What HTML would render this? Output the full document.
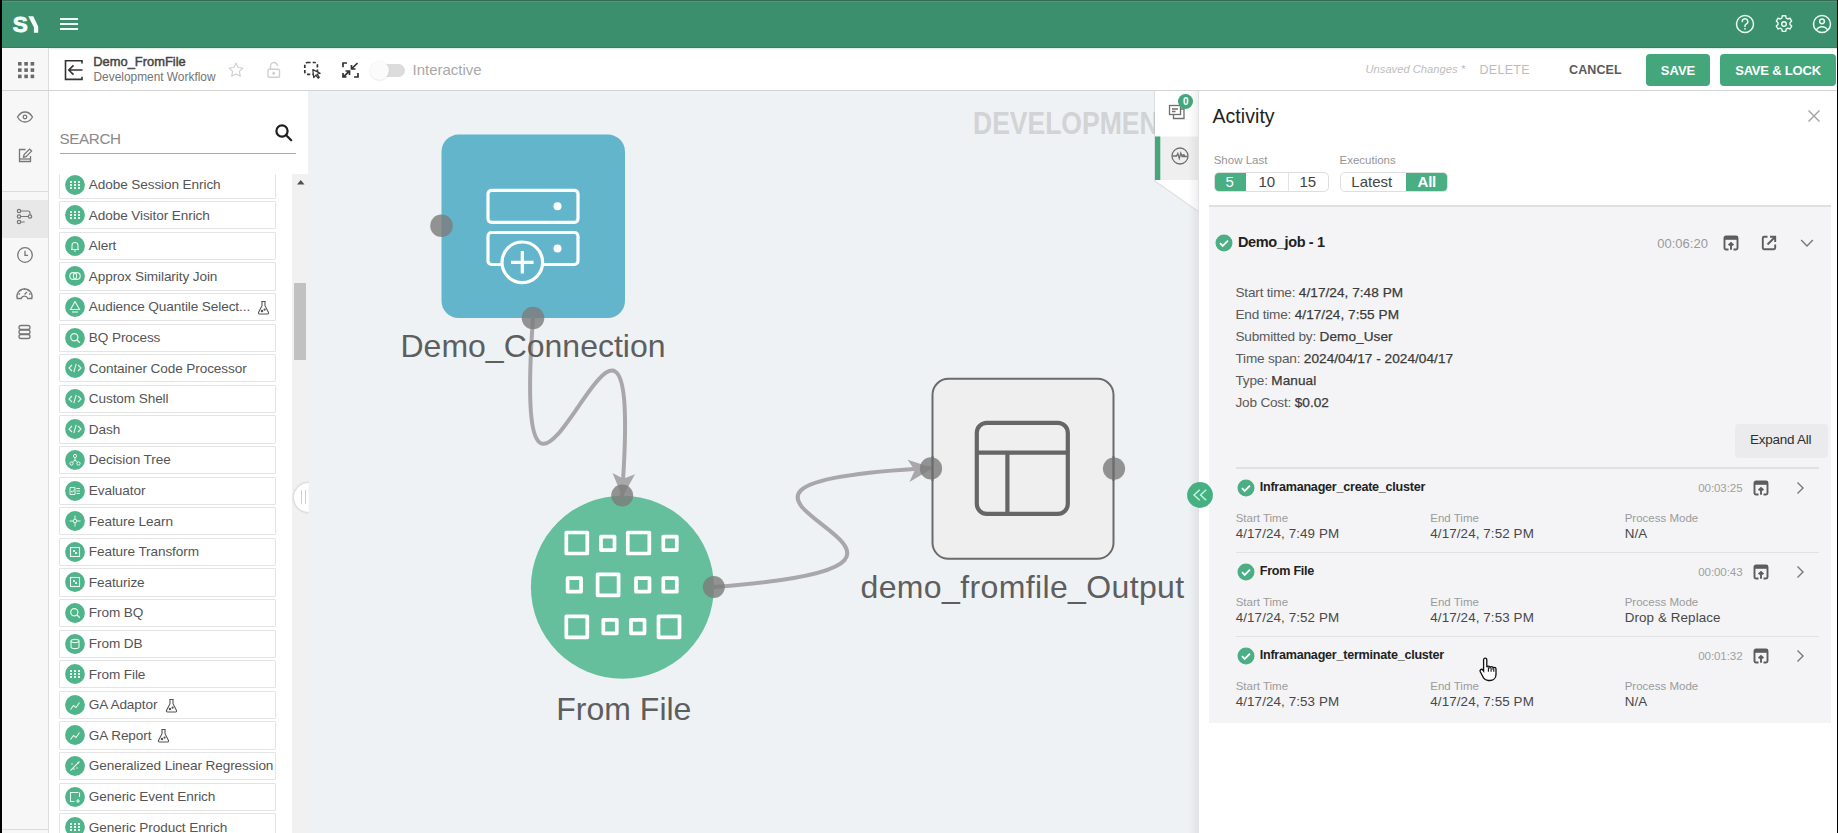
<!DOCTYPE html>
<html><head><meta charset="utf-8">
<style>
*{box-sizing:border-box;margin:0;padding:0}
html,body{width:1838px;height:833px;overflow:hidden;background:#fff;font-family:"Liberation Sans",sans-serif;position:relative}
.a{position:absolute}
.t{position:absolute;white-space:nowrap;line-height:1}
svg{position:absolute;overflow:visible}
#hdr{left:0;top:0;width:1838px;height:48px;background:#3b8f6c}
#hdrtop{left:0;top:0;width:1838px;height:1px;background:#356b54}
#hdrtop2{left:0;top:1px;width:1838px;height:1px;background:#43a078}
#lb{left:0;top:0;width:2px;height:833px;background:#000}
#rb{left:1837px;top:0;width:1px;height:833px;background:#000}
#side{left:2px;top:48px;width:47px;height:785px;background:#f7f7f7;border-right:1px solid #dcdcdc}
#tb{left:49px;top:48px;width:1788px;height:43px;background:#fff}
#tbline{left:2px;top:90px;width:1835px;height:1px;background:#d4d4d4}
#pal{left:49px;top:91px;width:259px;height:742px;background:#fff}
#canvas{left:308px;top:91px;width:890px;height:742px;background:#eef2f5;overflow:hidden}
#panel{left:1198px;top:91px;width:639px;height:742px;background:#fff;border-left:1px solid #e2e2e4}
.btn{position:absolute;background:#43a77b;border-radius:4px;color:#fff;font-weight:700;font-size:13px;line-height:33.6px;text-align:center;white-space:nowrap}
.item{position:absolute;left:59.5px;width:216.5px;height:28.4px;border:1px solid #e4e4e4;border-radius:1px;background:#fff}
.item .ic{position:absolute;left:4px;top:3.5px;width:20px;height:20px;border-radius:50%;background:#4fb389}
.item .tx{position:absolute;left:28.5px;top:6.5px;font-size:13.6px;line-height:1;color:#555;white-space:nowrap;letter-spacing:-0.1px}
</style></head><body>
<div id="hdr" class="a"></div>
<div id="hdrtop" class="a"></div>
<div id="hdrtop2" class="a"></div>
<div class="a" style="left:0;top:46.8px;width:1838px;height:1.3px;background:#3f7c62"></div>
<!-- logo -->
<div class="t" style="left:12.8px;top:13.9px;font-size:22.5px;font-weight:700;color:#f4fff9;-webkit-text-stroke:0.9px #f4fff9">S</div>
<svg style="left:0;top:0" width="60" height="48"><polygon points="28.2,16.2 33.3,16.2 38.2,26.4 38.2,32.7 33.9,32.7 33.9,27.3" fill="#f4fff9"/></svg>
<!-- hamburger -->
<div class="a" style="left:60px;top:18.4px;width:18px;height:2px;background:#effff8"></div>
<div class="a" style="left:60px;top:23.2px;width:18px;height:2px;background:#effff8"></div>
<div class="a" style="left:60px;top:28.1px;width:18px;height:2px;background:#effff8"></div>
<!-- header right icons -->
<svg style="left:1733px;top:12px" width="24" height="24" viewBox="0 0 24 24"><circle cx="12" cy="12" r="8.5" fill="none" stroke="#e6fff3" stroke-width="1.5"/><path d="M9.2 9.6a2.8 2.8 0 1 1 3.9 2.5c-.8.4-1.1.9-1.1 1.7v.6" fill="none" stroke="#e6fff3" stroke-width="1.5" stroke-linecap="round"/><circle cx="12" cy="16.8" r="0.9" fill="#e6fff3"/></svg>
<svg style="left:1771.5px;top:12px" width="24" height="24" viewBox="0 0 24 24"><path d="M10.3 3.8h3.4l.5 2.3 1.6.9 2.2-.8 1.7 2.9-1.7 1.6v1.8l1.7 1.6-1.7 2.9-2.2-.8-1.6.9-.5 2.3h-3.4l-.5-2.3-1.6-.9-2.2.8-1.7-2.9 1.7-1.6v-1.8L4.3 9.1 6 6.2l2.2.8 1.6-.9z" fill="none" stroke="#e6fff3" stroke-width="1.4" stroke-linejoin="round"/><circle cx="12" cy="12" r="2.3" fill="none" stroke="#e6fff3" stroke-width="1.4"/></svg>
<svg style="left:1810px;top:12px" width="24" height="24" viewBox="0 0 24 24"><circle cx="12" cy="12" r="8.5" fill="none" stroke="#e6fff3" stroke-width="1.5"/><circle cx="12" cy="9.3" r="2.4" fill="none" stroke="#e6fff3" stroke-width="1.5"/><path d="M6.3 18.2c1.2-2.3 3.3-3.5 5.7-3.5s4.5 1.2 5.7 3.5" fill="none" stroke="#e6fff3" stroke-width="1.5"/></svg>

<div id="side" class="a"></div>
<div id="tb" class="a"></div>
<div id="tbline" class="a"></div>
<div class="a" style="left:49px;top:48px;width:1788px;height:2px;background:linear-gradient(#d9ece4,rgba(255,255,255,0))"></div>
<!-- apps grid -->
<svg style="left:18px;top:62px" width="17" height="17" viewBox="0 0 17 17" fill="#6a6a6a"><rect x="0" y="0" width="3.6" height="3.6"/><rect x="6.3" y="0" width="3.6" height="3.6"/><rect x="12.6" y="0" width="3.6" height="3.6"/><rect x="0" y="6.3" width="3.6" height="3.6"/><rect x="6.3" y="6.3" width="3.6" height="3.6"/><rect x="12.6" y="6.3" width="3.6" height="3.6"/><rect x="0" y="12.6" width="3.6" height="3.6"/><rect x="6.3" y="12.6" width="3.6" height="3.6"/><rect x="12.6" y="12.6" width="3.6" height="3.6"/></svg>
<!-- sidebar icons -->
<div class="a" style="left:2px;top:191px;width:46px;height:1px;background:#dcdcdc"></div>
<div class="a" style="left:2px;top:200px;width:46px;height:38px;background:#e8e8e8"></div>
<svg style="left:15px;top:108px" width="20" height="18" viewBox="0 0 20 18"><path d="M2.5 9C4.5 5.6 7 4 10 4s5.5 1.6 7.5 5c-2 3.4-4.5 5-7.5 5S4.5 12.4 2.5 9z" fill="none" stroke="#777" stroke-width="1.3"/><circle cx="10" cy="9" r="1.8" fill="none" stroke="#777" stroke-width="1.3"/></svg>
<svg style="left:15px;top:146px" width="20" height="20" viewBox="0 0 20 20"><path d="M10.5 3.5H4.5v12h11V10" fill="none" stroke="#777" stroke-width="1.3"/><path d="M4.5 13h11" stroke="#777" stroke-width="1.3"/><path d="M8.5 11.2l.6-2.6 5.5-5.5 2 2-5.5 5.5z" fill="none" stroke="#777" stroke-width="1.3"/></svg>
<svg style="left:14px;top:206px" width="22" height="22" viewBox="0 0 22 22" fill="none" stroke="#777" stroke-width="1.2"><circle cx="5" cy="5" r="1.7"/><circle cx="5" cy="10.5" r="1.7"/><circle cx="5" cy="16" r="1.7"/><path d="M6.7 5h7.3a2 2 0 0 1 2 2v1.8"/><circle cx="16" cy="10.5" r="1.7"/><path d="M6.7 10.5h7.6M6.7 16h4"/></svg>
<svg style="left:14.5px;top:245px" width="20" height="20" viewBox="0 0 20 20" fill="none" stroke="#777" stroke-width="1.3"><circle cx="10" cy="10" r="7.3"/><path d="M10 5.8v4.5h3"/></svg>
<svg style="left:14px;top:283px" width="21" height="20" viewBox="0 0 21 20" fill="none" stroke="#777" stroke-width="1.3"><path d="M3.2 15.5A7.6 7.6 0 1 1 17.8 15.5h-4a3.5 3.5 0 0 0-6.6 0z"/><path d="M10.5 5.2v1.6M6.3 7l1 1.1M14.7 7l-1 1.1M4.6 11h1.5M16.4 11h-1.5M10.5 11.5l2.5-2.5"/></svg>
<svg style="left:14px;top:322px" width="21" height="20" viewBox="0 0 21 20" fill="none" stroke="#777" stroke-width="1.3"><rect x="5" y="3.5" width="11" height="4" rx="2"/><rect x="5" y="8" width="11" height="4" rx="2"/><rect x="5" y="12.5" width="11" height="4" rx="2"/></svg>
<div class="a" style="left:2px;top:828.5px;width:46px;height:1px;background:#dcdcdc"></div>

<!-- toolbar -->
<svg style="left:64px;top:59px" width="20" height="22" viewBox="0 0 20 22" fill="none" stroke="#333" stroke-width="1.6"><path d="M18 4.5V1.8H1.5v18.6H18v-2.7"/><path d="M18.5 11H5M9.5 6.4L4.8 11l4.7 4.6"/></svg>
<div class="t" style="left:93.3px;top:55.5px;font-size:12.9px;font-weight:400;color:#444;-webkit-text-stroke:0.45px #444;letter-spacing:0px">Demo_FromFile</div>
<div class="t" style="left:93.5px;top:72.2px;font-size:11.9px;color:#747474">Development Workflow</div>
<svg style="left:227px;top:60.5px" width="18" height="18" viewBox="0 0 24 24"><path d="M12 2.8l2.8 5.9 6.4.8-4.7 4.4 1.2 6.3L12 17.1l-5.7 3.1 1.2-6.3-4.7-4.4 6.4-.8z" fill="none" stroke="#cfcfcf" stroke-width="1.5" stroke-linejoin="round"/></svg>
<svg style="left:266px;top:61px" width="16" height="18" viewBox="0 0 16 18" fill="none" stroke="#cfcfcf" stroke-width="1.4"><path d="M4.5 8V5.2a3.5 3.5 0 0 1 7-.3"/><rect x="2" y="8.2" width="11.5" height="8" rx="1.2"/><circle cx="7.75" cy="12.2" r="0.8" fill="#cfcfcf"/></svg>
<svg style="left:303px;top:61px" width="20" height="20" viewBox="0 0 20 20" fill="none" stroke="#333" stroke-width="1.7"><rect x="1.8" y="1.5" width="12.6" height="11.8" rx="2.6" stroke-dasharray="3.2 2.1"/><path d="M9.8 8.6l7.4 3.6-3.2 1 2.3 3.1-1.2.9-2.3-3.1-2.1 2.5z" fill="#fff" stroke-width="1.2" stroke-linejoin="round"/></svg>
<svg style="left:342px;top:62px" width="17" height="16" viewBox="0 0 17 16" fill="none" stroke="#333" stroke-width="1.7"><path d="M1 5.2V1h4M16 11v4h-4M1 11v4h3.5M15.5 1L9.5 7M9.5 3v4h4M1.5 14.8L7.5 8.8M3.5 9h4v4"/></svg>
<div class="a" style="left:371px;top:63.5px;width:33.5px;height:13.5px;border-radius:7px;background:#dcdcdc"></div>
<div class="a" style="left:369.8px;top:60.8px;width:19px;height:19px;border-radius:50%;background:#fbfbfb;box-shadow:0 0.5px 2px rgba(0,0,0,0.12)"></div>
<div class="t" style="left:412.5px;top:62px;font-size:15px;color:#a9a9a9">Interactive</div>

<div class="t" style="left:1365.5px;top:64.3px;font-size:11.2px;font-style:italic;color:#bdbdbd">Unsaved Changes *</div>
<div class="t" style="left:1479.5px;top:64.3px;font-size:12.5px;color:#bcbcbc;letter-spacing:0.3px">DELETE</div>
<div class="t" style="left:1569px;top:64.3px;font-size:12.5px;font-weight:700;color:#5a5a5a;letter-spacing:0.1px">CANCEL</div>
<div class="btn" style="left:1646px;top:54px;width:64px;height:32px">SAVE</div>
<div class="btn" style="left:1720px;top:54px;width:116px;height:32px;letter-spacing:-0.2px">SAVE &amp; LOCK</div>
<div class="a" style="left:49px;top:173.5px;width:243px;height:660px;overflow:hidden">
<div class="item" style="left:10.3px;top:-3.0px"><svg style="left:4.6px;top:3px" width="20" height="20" viewBox="0 0 20 20"><circle cx="10" cy="10" r="9.9" fill="#50b48b"/><g fill="#e9f7f0"><rect x="5" y="6" width="2" height="2"/><rect x="9" y="6" width="2" height="2"/><rect x="13" y="6" width="2" height="2"/><rect x="5" y="9" width="2" height="2"/><rect x="9" y="9" width="2" height="2"/><rect x="13" y="9" width="2" height="2"/><rect x="5" y="12" width="2" height="2"/><rect x="9" y="12" width="2" height="2"/><rect x="13" y="12" width="2" height="2"/></g></svg><div class="tx">Adobe Session Enrich</div></div>
<div class="item" style="left:10.3px;top:27.6px"><svg style="left:4.6px;top:3px" width="20" height="20" viewBox="0 0 20 20"><circle cx="10" cy="10" r="9.9" fill="#50b48b"/><g fill="#e9f7f0"><rect x="5" y="6" width="2" height="2"/><rect x="9" y="6" width="2" height="2"/><rect x="13" y="6" width="2" height="2"/><rect x="5" y="9" width="2" height="2"/><rect x="9" y="9" width="2" height="2"/><rect x="13" y="9" width="2" height="2"/><rect x="5" y="12" width="2" height="2"/><rect x="9" y="12" width="2" height="2"/><rect x="13" y="12" width="2" height="2"/></g></svg><div class="tx">Adobe Visitor Enrich</div></div>
<div class="item" style="left:10.3px;top:58.2px"><svg style="left:4.6px;top:3px" width="20" height="20" viewBox="0 0 20 20"><circle cx="10" cy="10" r="9.9" fill="#50b48b"/><path d="M6 13.5h8M7 13.5V9.5a3 3 0 0 1 6 0v4M9 15h2" fill="none" stroke="#e9f7f0" stroke-width="1.1"/></svg><div class="tx">Alert</div></div>
<div class="item" style="left:10.3px;top:88.8px"><svg style="left:4.6px;top:3px" width="20" height="20" viewBox="0 0 20 20"><circle cx="10" cy="10" r="9.9" fill="#50b48b"/><circle cx="8.2" cy="10" r="3.4" fill="none" stroke="#e9f7f0" stroke-width="1.1"/><circle cx="11.8" cy="10" r="3.4" fill="none" stroke="#e9f7f0" stroke-width="1.1"/></svg><div class="tx">Approx Similarity Join</div></div>
<div class="item" style="left:10.3px;top:119.4px"><svg style="left:4.6px;top:3px" width="20" height="20" viewBox="0 0 20 20"><circle cx="10" cy="10" r="9.9" fill="#50b48b"/><path d="M10 4.5l4.5 8h-9z" fill="none" stroke="#e9f7f0" stroke-width="1.1"/><path d="M7 15h6" stroke="#e9f7f0" stroke-width="1.1"/></svg><div class="tx">Audience Quantile Select...</div><svg style="left:196.5px;top:6px" width="13" height="15" viewBox="0 0 13 15" fill="none" stroke="#555" stroke-width="1.1"><path d="M4.3 1.5h4.4M5 1.5v4.2L1.5 12.6a1 1 0 0 0 .9 1.4h8.2a1 1 0 0 0 .9-1.4L8 5.7V1.5"/><circle cx="5" cy="11" r=".7" fill="#555"/><circle cx="7.6" cy="9.6" r=".6" fill="#555"/></svg></div>
<div class="item" style="left:10.3px;top:150.0px"><svg style="left:4.6px;top:3px" width="20" height="20" viewBox="0 0 20 20"><circle cx="10" cy="10" r="9.9" fill="#50b48b"/><circle cx="9.3" cy="9.3" r="3.6" fill="none" stroke="#e9f7f0" stroke-width="1.2"/><path d="M12 12l2.8 2.8" stroke="#e9f7f0" stroke-width="1.3"/></svg><div class="tx">BQ Process</div></div>
<div class="item" style="left:10.3px;top:180.6px"><svg style="left:4.6px;top:3px" width="20" height="20" viewBox="0 0 20 20"><circle cx="10" cy="10" r="9.9" fill="#50b48b"/><path d="M7 7l-3 3 3 3M13 7l3 3-3 3M11.2 5.8l-2.4 8.4" fill="none" stroke="#e9f7f0" stroke-width="1.1"/></svg><div class="tx">Container Code Processor</div></div>
<div class="item" style="left:10.3px;top:211.2px"><svg style="left:4.6px;top:3px" width="20" height="20" viewBox="0 0 20 20"><circle cx="10" cy="10" r="9.9" fill="#50b48b"/><path d="M7 7l-3 3 3 3M13 7l3 3-3 3M11.2 5.8l-2.4 8.4" fill="none" stroke="#e9f7f0" stroke-width="1.1"/></svg><div class="tx">Custom Shell</div></div>
<div class="item" style="left:10.3px;top:241.8px"><svg style="left:4.6px;top:3px" width="20" height="20" viewBox="0 0 20 20"><circle cx="10" cy="10" r="9.9" fill="#50b48b"/><path d="M7 7l-3 3 3 3M13 7l3 3-3 3M11.2 5.8l-2.4 8.4" fill="none" stroke="#e9f7f0" stroke-width="1.1"/></svg><div class="tx">Dash</div></div>
<div class="item" style="left:10.3px;top:272.4px"><svg style="left:4.6px;top:3px" width="20" height="20" viewBox="0 0 20 20"><circle cx="10" cy="10" r="9.9" fill="#50b48b"/><circle cx="10" cy="6" r="1.6" fill="none" stroke="#e9f7f0" stroke-width="1"/><circle cx="6.5" cy="13.5" r="1.6" fill="none" stroke="#e9f7f0" stroke-width="1"/><circle cx="13.5" cy="13.5" r="1.6" fill="none" stroke="#e9f7f0" stroke-width="1"/><path d="M10 7.6v2.6M7.5 12l2.5-1.8 2.5 1.8" fill="none" stroke="#e9f7f0" stroke-width="1"/></svg><div class="tx">Decision Tree</div></div>
<div class="item" style="left:10.3px;top:303.0px"><svg style="left:4.6px;top:3px" width="20" height="20" viewBox="0 0 20 20"><circle cx="10" cy="10" r="9.9" fill="#50b48b"/><path d="M5 6.5h5v7H5zM11.5 7.5h3.5M11.5 10h3.5M11.5 12.5h3.5M6 10l1.3 1.3L9.5 8.5" fill="none" stroke="#e9f7f0" stroke-width="1"/></svg><div class="tx">Evaluator</div></div>
<div class="item" style="left:10.3px;top:333.6px"><svg style="left:4.6px;top:3px" width="20" height="20" viewBox="0 0 20 20"><circle cx="10" cy="10" r="9.9" fill="#50b48b"/><circle cx="10" cy="10" r="1.8" fill="none" stroke="#e9f7f0" stroke-width="1"/><path d="M10 4.5v3.7M10 11.8v3.7M4.5 10h3.7M11.8 10h3.7" stroke="#e9f7f0" stroke-width="1"/></svg><div class="tx">Feature Learn</div></div>
<div class="item" style="left:10.3px;top:364.2px"><svg style="left:4.6px;top:3px" width="20" height="20" viewBox="0 0 20 20"><circle cx="10" cy="10" r="9.9" fill="#50b48b"/><rect x="5.5" y="5.5" width="9" height="9" fill="none" stroke="#e9f7f0" stroke-width="1.1"/><path d="M8 8h2v2H8zM10 10h2v2h-2z" fill="#e9f7f0"/></svg><div class="tx">Feature Transform</div></div>
<div class="item" style="left:10.3px;top:394.8px"><svg style="left:4.6px;top:3px" width="20" height="20" viewBox="0 0 20 20"><circle cx="10" cy="10" r="9.9" fill="#50b48b"/><rect x="5.5" y="5.5" width="9" height="9" fill="none" stroke="#e9f7f0" stroke-width="1.1"/><path d="M8 8h2v2H8zM10 10h2v2h-2z" fill="#e9f7f0"/></svg><div class="tx">Featurize</div></div>
<div class="item" style="left:10.3px;top:425.4px"><svg style="left:4.6px;top:3px" width="20" height="20" viewBox="0 0 20 20"><circle cx="10" cy="10" r="9.9" fill="#50b48b"/><circle cx="9.3" cy="9.3" r="3.6" fill="none" stroke="#e9f7f0" stroke-width="1.2"/><path d="M12 12l2.8 2.8" stroke="#e9f7f0" stroke-width="1.3"/></svg><div class="tx">From BQ</div></div>
<div class="item" style="left:10.3px;top:456.0px"><svg style="left:4.6px;top:3px" width="20" height="20" viewBox="0 0 20 20"><circle cx="10" cy="10" r="9.9" fill="#50b48b"/><ellipse cx="10" cy="7" rx="4" ry="1.6" fill="none" stroke="#e9f7f0" stroke-width="1.1"/><path d="M6 7v6c0 .9 1.8 1.6 4 1.6s4-.7 4-1.6V7" fill="none" stroke="#e9f7f0" stroke-width="1.1"/></svg><div class="tx">From DB</div></div>
<div class="item" style="left:10.3px;top:486.6px"><svg style="left:4.6px;top:3px" width="20" height="20" viewBox="0 0 20 20"><circle cx="10" cy="10" r="9.9" fill="#50b48b"/><g fill="#e9f7f0"><rect x="5" y="6" width="2" height="2"/><rect x="9" y="6" width="2" height="2"/><rect x="13" y="6" width="2" height="2"/><rect x="5" y="9" width="2" height="2"/><rect x="9" y="9" width="2" height="2"/><rect x="13" y="9" width="2" height="2"/><rect x="5" y="12" width="2" height="2"/><rect x="9" y="12" width="2" height="2"/><rect x="13" y="12" width="2" height="2"/></g></svg><div class="tx">From File</div></div>
<div class="item" style="left:10.3px;top:517.2px"><svg style="left:4.6px;top:3px" width="20" height="20" viewBox="0 0 20 20"><circle cx="10" cy="10" r="9.9" fill="#50b48b"/><path d="M5.5 14.5l3-4 2.5 2 3.5-5" fill="none" stroke="#e9f7f0" stroke-width="1.1"/></svg><div class="tx">GA Adaptor</div><svg style="left:104.5px;top:6px" width="13" height="15" viewBox="0 0 13 15" fill="none" stroke="#555" stroke-width="1.1"><path d="M4.3 1.5h4.4M5 1.5v4.2L1.5 12.6a1 1 0 0 0 .9 1.4h8.2a1 1 0 0 0 .9-1.4L8 5.7V1.5"/><circle cx="5" cy="11" r=".7" fill="#555"/><circle cx="7.6" cy="9.6" r=".6" fill="#555"/></svg></div>
<div class="item" style="left:10.3px;top:547.8px"><svg style="left:4.6px;top:3px" width="20" height="20" viewBox="0 0 20 20"><circle cx="10" cy="10" r="9.9" fill="#50b48b"/><path d="M5.5 14.5l3-4 2.5 2 3.5-5" fill="none" stroke="#e9f7f0" stroke-width="1.1"/></svg><div class="tx">GA Report</div><svg style="left:96.5px;top:6px" width="13" height="15" viewBox="0 0 13 15" fill="none" stroke="#555" stroke-width="1.1"><path d="M4.3 1.5h4.4M5 1.5v4.2L1.5 12.6a1 1 0 0 0 .9 1.4h8.2a1 1 0 0 0 .9-1.4L8 5.7V1.5"/><circle cx="5" cy="11" r=".7" fill="#555"/><circle cx="7.6" cy="9.6" r=".6" fill="#555"/></svg></div>
<div class="item" style="left:10.3px;top:578.4px"><svg style="left:4.6px;top:3px" width="20" height="20" viewBox="0 0 20 20"><circle cx="10" cy="10" r="9.9" fill="#50b48b"/><path d="M5.5 14.5l9-9" stroke="#e9f7f0" stroke-width="1.1"/><g fill="#e9f7f0"><circle cx="7" cy="8" r=".8"/><circle cx="12" cy="12" r=".8"/><circle cx="9" cy="13" r=".8"/><circle cx="13" cy="7" r=".8"/></g></svg><div class="tx">Generalized Linear Regression</div></div>
<div class="item" style="left:10.3px;top:609.0px"><svg style="left:4.6px;top:3px" width="20" height="20" viewBox="0 0 20 20"><circle cx="10" cy="10" r="9.9" fill="#50b48b"/><path d="M13.5 5.5h-8v9h4M14.5 10v-4.5" fill="none" stroke="#e9f7f0" stroke-width="1.1"/><path d="M13 12v4M11 14h4" stroke="#e9f7f0" stroke-width="1.1"/></svg><div class="tx">Generic Event Enrich</div></div>
<div class="item" style="left:10.3px;top:639.6px"><svg style="left:4.6px;top:3px" width="20" height="20" viewBox="0 0 20 20"><circle cx="10" cy="10" r="9.9" fill="#50b48b"/><g fill="#e9f7f0"><rect x="5" y="6" width="2" height="2"/><rect x="9" y="6" width="2" height="2"/><rect x="13" y="6" width="2" height="2"/><rect x="5" y="9" width="2" height="2"/><rect x="9" y="9" width="2" height="2"/><rect x="13" y="9" width="2" height="2"/><rect x="5" y="12" width="2" height="2"/><rect x="9" y="12" width="2" height="2"/><rect x="13" y="12" width="2" height="2"/></g></svg><div class="tx">Generic Product Enrich</div></div>
</div><!-- palette search -->
<div class="t" style="left:59.5px;top:130.6px;font-size:15.2px;color:#8a8a8a;letter-spacing:-0.35px">SEARCH</div>
<svg style="left:274px;top:123px" width="20" height="20" viewBox="0 0 20 20" fill="none" stroke="#1e1e1e" stroke-width="2.2"><circle cx="8" cy="8" r="5.6"/><path d="M12.2 12.2l5 5" stroke-linecap="round"/></svg>
<div class="a" style="left:59.5px;top:152.6px;width:236.5px;height:1.6px;background:#a9a9a9"></div>
<!-- scrollbar -->
<div class="a" style="left:292px;top:173.5px;width:16.2px;height:660px;background:#f1f1f1"></div>
<svg style="left:296px;top:178px" width="10" height="8" viewBox="0 0 10 8"><path d="M1 6.5h7.5L4.75 2z" fill="#505050"/></svg>
<div class="a" style="left:294.4px;top:283px;width:12.1px;height:77px;background:#c1c1c1"></div>
<!-- canvas -->
<div id="canvas" class="a">
 <div class="t" style="left:665.3px;top:16.6px;font-size:31px;font-weight:700;color:#d2d3d5;letter-spacing:0px;transform:scaleX(0.855);transform-origin:0 0">DEVELOPMENT</div>
</div>
<!-- handle -->
<div class="a" style="left:294.4px;top:482.8px;width:29px;height:29px;border-radius:50%;background:#fff;box-shadow:0 0 3px rgba(0,0,0,0.25);clip-path:inset(-5px 14.7px -5px -5px)"></div>
<div class="a" style="left:301.3px;top:489.5px;width:1.2px;height:14.5px;background:#cfcfcf"></div>
<div class="a" style="left:305.2px;top:489.5px;width:1.2px;height:14.5px;background:#cfcfcf"></div>

<!-- nodes & edges -->
<svg style="left:0;top:0" width="1838" height="833">
 <!-- Demo_Connection node -->
 <rect x="441.5" y="134.6" width="183.5" height="183.4" rx="17" fill="#63b5cc"/>
 <g fill="none" stroke="#fff" stroke-width="3.2">
  <rect x="488" y="190.3" width="90" height="32" rx="3.5"/>
  <path d="M508 264.5H491.5a3.5 3.5 0 0 1-3.5-3.5v-25a3.5 3.5 0 0 1 3.5-3.5h83a3.5 3.5 0 0 1 3.5 3.5v25a3.5 3.5 0 0 1-3.5 3.5H537"/>
  <circle cx="522.3" cy="262.3" r="20.3" fill="#63b5cc"/>
  <path d="M522.3 251v22.6M511 262.3h22.6"/>
 </g>
 <circle cx="557.5" cy="206.3" r="4" fill="#fff"/>
 <circle cx="557.5" cy="248.5" r="4" fill="#fff"/>
 <!-- From File circle node -->
 <circle cx="622.4" cy="587.2" r="91.5" fill="#66bf9c"/>
 <g fill="none" stroke="#fff" stroke-width="3.7" stroke-linejoin="round">
  <rect x="566.3" y="532.5" width="21" height="21"/>
  <rect x="601" y="536.6" width="13.5" height="13.5"/>
  <rect x="627.8" y="532.5" width="21.5" height="21"/>
  <rect x="663.3" y="536.6" width="13.5" height="13.5"/>
  <rect x="567.6" y="578.2" width="13.5" height="13.5"/>
  <rect x="597.6" y="574.3" width="21" height="21"/>
  <rect x="636" y="578.2" width="13.5" height="13.5"/>
  <rect x="663.3" y="578.2" width="13.5" height="13.5"/>
  <rect x="566.3" y="616.3" width="21" height="21"/>
  <rect x="603.3" y="619.8" width="13.5" height="13.5"/>
  <rect x="631" y="619.8" width="13.5" height="13.5"/>
  <rect x="658.5" y="616.3" width="21" height="21"/>
 </g>
 <!-- Output node -->
 <rect x="932.5" y="378.8" width="181" height="180" rx="16" fill="#efefef" stroke="#6b6b6b" stroke-width="2"/>
 <g fill="none" stroke="#666" stroke-width="4.2">
  <rect x="976.8" y="422.9" width="91" height="91" rx="10"/>
  <path d="M976.8 452.7h91M1007.4 452.7v61"/>
 </g>
 <!-- edges -->
 <g fill="none" stroke="#a9a7a9" stroke-width="4" stroke-linecap="round">
  <path d="M533 318C508.5 662.2 647.2 153.1 622 495"/>
  <path d="M714 587C1057 561.8 587.9 486.1 931 468"/>
 </g>
 <path d="M612.5 472.9L623.4 478.8L635 474.2L622.5 497z" fill="#a9a7a9"/>
 <path d="M907.6 459.7L914.8 470.2L909.4 481.9L933 468z" fill="#a9a7a9"/>
 <!-- ports -->
 <g fill="#7d7d7d" fill-opacity="0.82">
  <circle cx="441.5" cy="225.8" r="11.3"/>
  <circle cx="533" cy="318" r="11.3"/>
  <circle cx="622.2" cy="495.5" r="11"/>
  <circle cx="713.8" cy="587" r="11"/>
  <circle cx="931" cy="468.4" r="11.1"/>
  <circle cx="1114" cy="468.6" r="11.1"/>
 </g>
 <path d="M932.5 456v25" stroke="#6b6b6b" stroke-width="2"/>
 <path d="M1113.5 456v25" stroke="#6b6b6b" stroke-width="2"/>
</svg>
<div class="t" style="left:400.5px;top:330px;font-size:32px;color:#5e5e5e">Demo_Connection</div>
<div class="t" style="left:556.3px;top:692.9px;font-size:32px;color:#5e5e5e">From File</div>
<div class="t" style="left:860.5px;top:571.2px;font-size:32px;color:#5e5e5e;letter-spacing:0.37px">demo_fromfile_Output</div>
<div id="panel" class="a"></div>
<svg style="left:1150px;top:91px" width="50" height="125"><path d="M4 0H48V121L4 90.2z" fill="#000" opacity="0.05"/><path d="M4.5 0H48V120.5L4.5 89.9z" fill="#000" opacity="0.05"/><path d="M5 0H48V119.8L5 89.6z" fill="#fff"/><rect x="5" y="45.5" width="43" height="43.5" fill="#efefef"/><rect x="5" y="45.5" width="5.3" height="43.5" fill="#43a77b"/></svg>
<svg style="left:1168px;top:103px" width="18" height="18" viewBox="0 0 18 18" fill="none" stroke="#6f6f6f" stroke-width="1.3"><rect x="1.5" y="2.5" width="11" height="9"/><path d="M4 6h6M4 8.5h3.5"/><path d="M12.5 6h3.5v9.5H5.5v-4" /></svg>
<div class="a" style="left:1178.3px;top:93.9px;width:15px;height:15px;border-radius:50%;background:#43a77b;color:#fff;font-size:10px;font-weight:700;text-align:center;line-height:15px">0</div>
<svg style="left:1170px;top:146px" width="20" height="20" viewBox="0 0 20 20" fill="none" stroke="#6f6f6f" stroke-width="1.3"><circle cx="10" cy="10" r="8"/><path d="M2.5 10h4l1.3-2.5 1.5 5 1.5-5.5 1.3 3.5h1.2c.8 0 1.2-.4 1.2-.9s-.4-.9-1-.9-.9.5-.7 1 .6.8 1.2.8h3.5"/></svg>
<div class="a" style="left:1188px;top:91px;width:10px;height:742px;background:linear-gradient(to right,rgba(0,0,0,0),rgba(0,0,0,0.06))"></div>
<div class="t" style="left:1212.5px;top:106.79px;font-size:19.5px;color:#222;letter-spacing:0.05px">Activity</div>
<svg style="left:1806px;top:108px" width="16" height="16" viewBox="0 0 16 16"><path d="M2.5 2.5l11 11M13.5 2.5l-11 11" stroke="#a6a6a6" stroke-width="1.5"/></svg>
<div class="t" style="left:1213.7px;top:155.27px;font-size:11.5px;color:#969696;">Show Last</div>
<div class="t" style="left:1339.5px;top:155.27px;font-size:11.5px;color:#969696;">Executions</div>
<div class="a" style="left:1213.7px;top:172px;width:115.3px;height:20.2px;border:1px solid #dedede;border-radius:5px;background:#fff;overflow:hidden"><div class="a" style="left:-1px;top:-1px;width:32.7px;height:20.2px;background:#4aae83"></div><div class="a" style="left:72.9px;top:0;width:1px;height:18.2px;background:#e3e3e3"></div></div>
<div class="a" style="left:1339.5px;top:172px;width:108.1px;height:20.2px;border:1px solid #dedede;border-radius:5px;background:#fff;overflow:hidden"><div class="a" style="left:65.1px;top:-1px;width:43px;height:20.2px;background:#4aae83"></div></div>
<div class="t" style="left:1225.5px;top:174.10px;font-size:15px;color:#fff;">5</div>
<div class="t" style="left:1258.5px;top:174.10px;font-size:15px;color:#444;">10</div>
<div class="t" style="left:1299.5px;top:174.10px;font-size:15px;color:#444;">15</div>
<div class="t" style="left:1351.3px;top:174.10px;font-size:15px;color:#444;">Latest</div>
<div class="t" style="left:1417.6px;top:174.10px;font-size:15px;color:#fff;font-weight:700;letter-spacing:-0.3px">All</div>
<div class="a" style="left:1209px;top:206px;width:622px;height:516.5px;background:#f4f4f6"></div>
<div class="a" style="left:1209px;top:205.3px;width:622px;height:1.3px;background:#e0e0e0"></div>
<svg style="left:1213.6px;top:232.8px" width="20" height="20" viewBox="0 0 20 20"><circle cx="10" cy="10" r="8.5" fill="#4cae84"/><path d="M6 10.2l2.7 2.7L14 7.6" fill="none" stroke="#fff" stroke-width="1.8"/></svg>
<div class="t" style="left:1237.9px;top:234.93px;font-size:14.5px;color:#222;font-weight:700;letter-spacing:-0.35px">Demo_job - 1</div>
<div class="t" style="left:1657.3px;top:236.70px;font-size:13px;color:#9a9a9a;">00:06:20</div>
<svg style="left:1722.7px;top:234.5px" width="16" height="16" viewBox="0 0 16 16" fill="none" stroke="#5d5d5d" stroke-width="1.9"><path d="M5.5 14.5H3A1.5 1.5 0 0 1 1.5 13V3A1.5 1.5 0 0 1 3 1.5h10A1.5 1.5 0 0 1 14.5 3v10a1.5 1.5 0 0 1-1.5 1.5h-2.5"/><path d="M1.5 3.3h13" stroke-width="3"/><path d="M8 14.8V8.3M5.6 10.3L8 8l2.4 2.3"/></svg>
<svg style="left:1761.3px;top:234.5px" width="16" height="16" viewBox="0 0 16 16" fill="none" stroke="#5d5d5d" stroke-width="1.9"><path d="M6.5 1.8H3A1.3 1.3 0 0 0 1.8 3v10A1.3 1.3 0 0 0 3 14.2h10a1.3 1.3 0 0 0 1.2-1.2V9.5"/><path d="M9 1.8h5.2V7M14 2L6.5 9.5"/></svg>
<svg style="left:1799.3px;top:234.5px" width="16" height="16" viewBox="0 0 16 16"><path d="M2.2 5l5.8 6 5.8-6" fill="none" stroke="#777" stroke-width="1.4"/></svg>
<div class="t" style="left:1235.5px;top:285.59px;font-size:13.6px;color:#5a5a5a;letter-spacing:-0.2px">Start time: <span style="color:#3a3a3a;-webkit-text-stroke:0.25px #3a3a3a;letter-spacing:0.05px">4/17/24, 7:48 PM</span></div>
<div class="t" style="left:1235.5px;top:307.59px;font-size:13.6px;color:#5a5a5a;letter-spacing:-0.2px">End time: <span style="color:#3a3a3a;-webkit-text-stroke:0.25px #3a3a3a;letter-spacing:0.05px">4/17/24, 7:55 PM</span></div>
<div class="t" style="left:1235.5px;top:329.59px;font-size:13.6px;color:#5a5a5a;letter-spacing:-0.2px">Submitted by: <span style="color:#3a3a3a;-webkit-text-stroke:0.25px #3a3a3a;letter-spacing:0.05px">Demo_User</span></div>
<div class="t" style="left:1235.5px;top:351.59px;font-size:13.6px;color:#5a5a5a;letter-spacing:-0.2px">Time span: <span style="color:#3a3a3a;-webkit-text-stroke:0.25px #3a3a3a;letter-spacing:0.05px">2024/04/17 - 2024/04/17</span></div>
<div class="t" style="left:1235.5px;top:373.59px;font-size:13.6px;color:#5a5a5a;letter-spacing:-0.2px">Type: <span style="color:#3a3a3a;-webkit-text-stroke:0.25px #3a3a3a;letter-spacing:0.05px">Manual</span></div>
<div class="t" style="left:1235.5px;top:395.59px;font-size:13.6px;color:#5a5a5a;letter-spacing:-0.2px">Job Cost: <span style="color:#3a3a3a;-webkit-text-stroke:0.25px #3a3a3a;letter-spacing:0.05px">$0.02</span></div>
<div class="a" style="left:1735px;top:423.7px;width:93.2px;height:34px;background:#ebebed;border-radius:4px"></div>
<div class="t" style="left:1750.0px;top:433.37px;font-size:13.5px;color:#2f2f2f;letter-spacing:-0.25px">Expand All</div>
<div class="a" style="left:1235.7px;top:467.4px;width:583.3px;height:1.2px;background:#e1e1e3"></div>
<svg style="left:1235.6px;top:477.9px" width="20" height="20" viewBox="0 0 20 20"><circle cx="10" cy="10" r="8.5" fill="#4cae84"/><path d="M6 10.2l2.7 2.7L14 7.6" fill="none" stroke="#fff" stroke-width="1.8"/></svg>
<div class="t" style="left:1259.7px;top:480.73px;font-size:12.6px;color:#222;font-weight:700;letter-spacing:-0.25px">Inframanager_create_cluster</div>
<div class="t" style="left:1698.2px;top:481.88px;font-size:11.6px;color:#a0a0a0;letter-spacing:-0.1px">00:03:25</div>
<svg style="left:1753.1px;top:479.5px" width="16" height="16" viewBox="0 0 16 16" fill="none" stroke="#5d5d5d" stroke-width="1.9"><path d="M5.5 14.5H3A1.5 1.5 0 0 1 1.5 13V3A1.5 1.5 0 0 1 3 1.5h10A1.5 1.5 0 0 1 14.5 3v10a1.5 1.5 0 0 1-1.5 1.5h-2.5"/><path d="M1.5 3.3h13" stroke-width="3"/><path d="M8 14.8V8.3M5.6 10.3L8 8l2.4 2.3"/></svg>
<svg style="left:1791.7px;top:479.7px" width="16" height="16" viewBox="0 0 16 16"><path d="M5.5 2.5l5.5 5.5-5.5 5.5" fill="none" stroke="#777" stroke-width="1.4"/></svg>
<div class="t" style="left:1235.7px;top:513.27px;font-size:11.5px;color:#9b9b9b;">Start Time</div>
<div class="t" style="left:1235.7px;top:527.06px;font-size:13.4px;color:#484848;letter-spacing:0.1px">4/17/24, 7:49 PM</div>
<div class="t" style="left:1430.3px;top:513.27px;font-size:11.5px;color:#9b9b9b;">End Time</div>
<div class="t" style="left:1430.3px;top:527.06px;font-size:13.4px;color:#484848;letter-spacing:0.1px">4/17/24, 7:52 PM</div>
<div class="t" style="left:1624.7px;top:513.27px;font-size:11.5px;color:#9b9b9b;">Process Mode</div>
<div class="t" style="left:1624.7px;top:527.06px;font-size:13.4px;color:#484848;letter-spacing:0.1px">N/A</div>
<div class="a" style="left:1235.7px;top:551.5px;width:583.3px;height:1.2px;background:#e1e1e3"></div>
<svg style="left:1235.6px;top:562.0px" width="20" height="20" viewBox="0 0 20 20"><circle cx="10" cy="10" r="8.5" fill="#4cae84"/><path d="M6 10.2l2.7 2.7L14 7.6" fill="none" stroke="#fff" stroke-width="1.8"/></svg>
<div class="t" style="left:1259.7px;top:564.83px;font-size:12.6px;color:#222;font-weight:700;letter-spacing:-0.25px">From File</div>
<div class="t" style="left:1698.2px;top:565.98px;font-size:11.6px;color:#a0a0a0;letter-spacing:-0.1px">00:00:43</div>
<svg style="left:1753.1px;top:563.6px" width="16" height="16" viewBox="0 0 16 16" fill="none" stroke="#5d5d5d" stroke-width="1.9"><path d="M5.5 14.5H3A1.5 1.5 0 0 1 1.5 13V3A1.5 1.5 0 0 1 3 1.5h10A1.5 1.5 0 0 1 14.5 3v10a1.5 1.5 0 0 1-1.5 1.5h-2.5"/><path d="M1.5 3.3h13" stroke-width="3"/><path d="M8 14.8V8.3M5.6 10.3L8 8l2.4 2.3"/></svg>
<svg style="left:1791.7px;top:563.8px" width="16" height="16" viewBox="0 0 16 16"><path d="M5.5 2.5l5.5 5.5-5.5 5.5" fill="none" stroke="#777" stroke-width="1.4"/></svg>
<div class="t" style="left:1235.7px;top:597.37px;font-size:11.5px;color:#9b9b9b;">Start Time</div>
<div class="t" style="left:1235.7px;top:611.16px;font-size:13.4px;color:#484848;letter-spacing:0.1px">4/17/24, 7:52 PM</div>
<div class="t" style="left:1430.3px;top:597.37px;font-size:11.5px;color:#9b9b9b;">End Time</div>
<div class="t" style="left:1430.3px;top:611.16px;font-size:13.4px;color:#484848;letter-spacing:0.1px">4/17/24, 7:53 PM</div>
<div class="t" style="left:1624.7px;top:597.37px;font-size:11.5px;color:#9b9b9b;">Process Mode</div>
<div class="t" style="left:1624.7px;top:611.16px;font-size:13.4px;color:#484848;letter-spacing:0.1px">Drop &amp; Replace</div>
<div class="a" style="left:1235.7px;top:635.6px;width:583.3px;height:1.2px;background:#e1e1e3"></div>
<svg style="left:1235.6px;top:646.0999999999999px" width="20" height="20" viewBox="0 0 20 20"><circle cx="10" cy="10" r="8.5" fill="#4cae84"/><path d="M6 10.2l2.7 2.7L14 7.6" fill="none" stroke="#fff" stroke-width="1.8"/></svg>
<div class="t" style="left:1259.7px;top:648.93px;font-size:12.6px;color:#222;font-weight:700;letter-spacing:-0.25px">Inframanager_terminate_cluster</div>
<div class="t" style="left:1698.2px;top:650.08px;font-size:11.6px;color:#a0a0a0;letter-spacing:-0.1px">00:01:32</div>
<svg style="left:1753.1px;top:647.7px" width="16" height="16" viewBox="0 0 16 16" fill="none" stroke="#5d5d5d" stroke-width="1.9"><path d="M5.5 14.5H3A1.5 1.5 0 0 1 1.5 13V3A1.5 1.5 0 0 1 3 1.5h10A1.5 1.5 0 0 1 14.5 3v10a1.5 1.5 0 0 1-1.5 1.5h-2.5"/><path d="M1.5 3.3h13" stroke-width="3"/><path d="M8 14.8V8.3M5.6 10.3L8 8l2.4 2.3"/></svg>
<svg style="left:1791.7px;top:647.9px" width="16" height="16" viewBox="0 0 16 16"><path d="M5.5 2.5l5.5 5.5-5.5 5.5" fill="none" stroke="#777" stroke-width="1.4"/></svg>
<div class="t" style="left:1235.7px;top:681.47px;font-size:11.5px;color:#9b9b9b;">Start Time</div>
<div class="t" style="left:1235.7px;top:695.26px;font-size:13.4px;color:#484848;letter-spacing:0.1px">4/17/24, 7:53 PM</div>
<div class="t" style="left:1430.3px;top:681.47px;font-size:11.5px;color:#9b9b9b;">End Time</div>
<div class="t" style="left:1430.3px;top:695.26px;font-size:13.4px;color:#484848;letter-spacing:0.1px">4/17/24, 7:55 PM</div>
<div class="t" style="left:1624.7px;top:681.47px;font-size:11.5px;color:#9b9b9b;">Process Mode</div>
<div class="t" style="left:1624.7px;top:695.26px;font-size:13.4px;color:#484848;letter-spacing:0.1px">N/A</div>
<svg style="left:1186px;top:480.5px" width="28" height="28" viewBox="0 0 28 28"><circle cx="14" cy="14" r="12.9" fill="#47b083"/><path d="M13.7 8.7L8 14l5.7 5.3M20.2 8.7L14.5 14l5.7 5.3" fill="none" stroke="#c4f7dc" stroke-width="1.4"/></svg>
<svg style="left:1478px;top:656px" width="22" height="26" viewBox="0 0 22 26"><path d="M7.2 2.2c.9 0 1.6.7 1.6 1.6v7.3c.3-.6.9-1 1.6-1 .9 0 1.5.6 1.6 1.3.3-.5.8-.8 1.5-.8.9 0 1.6.7 1.6 1.5.3-.4.8-.7 1.3-.7.9 0 1.6.7 1.6 1.6v5.4c0 3.7-2.7 6.1-6.2 6.1h-1.6c-2.2 0-3.6-1-4.7-2.6L2.3 15.8c-.5-.8-.3-1.7.4-2.2.7-.5 1.7-.3 2.2.4l.7 1V3.8c0-.9.7-1.6 1.6-1.6z" fill="#fff" stroke="#111" stroke-width="1.3"/><path d="M10.4 11.2v4.5M13.1 11.8v3.9M15.8 12.5v3.2" stroke="#111" stroke-width="1.1"/></svg><div id="lb" class="a"></div><div id="rb" class="a"></div></body></html>
